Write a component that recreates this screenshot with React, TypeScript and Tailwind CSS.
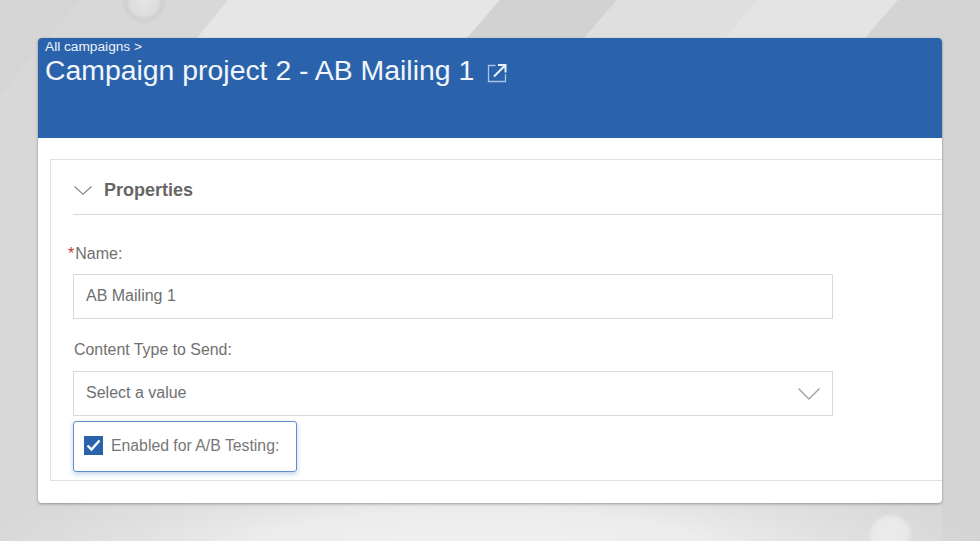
import React from "react";

function Backdrop() {
  return (
    <svg className="absolute inset-0" width="980" height="541" viewBox="0 0 980 541" aria-hidden="true">
      <defs>
        <filter id="soft" x="-20%" y="-20%" width="140%" height="140%">
          <feGaussianBlur stdDeviation="1.5" />
        </filter>
        <radialGradient id="ballTop" cx="0.5" cy="0.45" r="0.5">
          <stop offset="0" stopColor="#e4e4e4" />
          <stop offset="0.72" stopColor="#dddddd" />
          <stop offset="0.92" stopColor="#cbcbcb" />
          <stop offset="1" stopColor="#d6d6d6" />
        </radialGradient>
        <radialGradient id="ballBottom" cx="0.42" cy="0.45" r="0.58">
          <stop offset="0" stopColor="#ececec" />
          <stop offset="0.75" stopColor="#e8e8e8" />
          <stop offset="1" stopColor="#d8d8d8" />
        </radialGradient>
        <radialGradient id="floor" gradientUnits="userSpaceOnUse" cx="0" cy="0" r="1" gradientTransform="translate(480 570) scale(520 120)">
          <stop offset="0" stopColor="#f3f3f3" />
          <stop offset="0.5" stopColor="#ececec" />
          <stop offset="1" stopColor="#e4e4e4" stopOpacity="0" />
        </radialGradient>
      </defs>
      <rect width="980" height="541" fill="#d8d8d8" />
      <polygon points="0,0 80,0 0,95" fill="#d5d5d5" />
      <polygon points="228,0 500,0 467,38 197,38" fill="#e6e6e6" />
      <polygon points="500,0 617,0 584,38 467,38" fill="#d2d2d2" />
      <polygon points="617,0 757,0 725,38 584,38" fill="#dfdfdf" />
      <polygon points="757,0 898,0 865,38 725,38" fill="#e4e4e4" />
      <polygon points="898,0 980,0 980,541 942,541 942,38 865,38" fill="#d4d4d4" />
      <rect y="440" width="980" height="101" fill="url(#floor)" />
      <circle cx="144" cy="3" r="21" fill="url(#ballTop)" filter="url(#soft)" />
      <circle cx="892" cy="537" r="22" fill="url(#ballBottom)" filter="url(#soft)" />
    </svg>
  );
}

export default function App() {
  return (
    <div className="relative h-[541px] w-[980px] overflow-hidden font-['Liberation_Sans',Arial,sans-serif]">
      <Backdrop />
      <div className="relative pl-[38px] pt-[38px]">
        <div className="h-[465px] w-[904px] overflow-hidden rounded-[4px] bg-white shadow-[0_1px_3px_rgba(0,0,0,0.35)]">
          <header className="h-[100px] bg-[#2a63ac] pl-[7px] text-white">
            <div className="text-[13.7px] leading-[18px] text-[#eef3fa]">All campaigns &gt;</div>
            <div className="flex h-[30px] items-center gap-[13px]">
              <h1 className="-mt-[2px] text-[28.4px] leading-[30px] text-[#f2f6fb]">Campaign project 2 - AB Mailing 1</h1>
              <svg width="20" height="20" viewBox="0 0 20 20" fill="none" className="mt-[3px]">
                <path d="M8.5 2.5H1.5v16h17V11" stroke="#a9c4e6" strokeWidth="1.3" />
                <path d="M7 13.5 17.5 3M11 2h7.5v7.5" stroke="#eaf1f9" strokeWidth="2" />
              </svg>
            </div>
          </header>
          <div className="pl-[12px] pt-[21px]">
            <section className="h-[322px] border border-r-0 border-[#e0e0e0] pl-[22px]">
              <div className="flex h-[55px] items-center gap-[12px] border-b border-[#d9d9d9] pl-[1px] pt-[6px]">
                <svg width="18" height="9" viewBox="0 0 18 9" fill="none" stroke="#8a8a8a" strokeWidth="1.2">
                  <path d="M0.5 0.5 9 8.2 17.5 0.5" />
                </svg>
                <h2 className="text-[18px] font-bold text-[#666666]">Properties</h2>
              </div>
              <div className="w-[760px]">
                <label className="-ml-[5px] mt-[29px] flex h-[20px] items-center text-[16px] text-[#707070]">
                  <span className="mr-[1px] text-[#c23934]">*</span>Name:
                </label>
                <div className="mt-[10px] flex h-[45px] items-center border border-[#d9d9d9] pb-[2px] pl-[12px] text-[16px] text-[#707070]">
                  AB Mailing 1
                </div>
                <label className="mt-[21px] flex h-[20px] items-center pl-[1px] text-[15.9px] text-[#707070]">
                  Content Type to Send:
                </label>
                <div className="mt-[11px] flex h-[45px] items-center justify-between border border-[#d9d9d9] pb-[2px] pl-[12px] pr-[12px] text-[16px] text-[#707070]">
                  Select a value
                  <svg width="22" height="12" viewBox="0 0 22 12" fill="none" stroke="#a0a0a0" strokeWidth="1.4" className="mt-[2px]">
                    <path d="M0.5 0.5 11 11 21.5 0.5" />
                  </svg>
                </div>
                <div className="mt-[5px] flex h-[51px] w-[224px] items-center gap-[8px] rounded-[3px] border border-[#5b8fd0] pb-[2px] pl-[10px] text-[15.8px] text-[#777777] shadow-[0_2px_5px_rgba(42,99,172,0.3)]">
                  <span className="flex h-[19px] w-[19px] items-center justify-center bg-[#2a63ac]">
                    <svg width="15" height="13" viewBox="0 0 15 13" fill="none" stroke="white" strokeWidth="2.4">
                      <path d="M1.5 6.5 5.5 10.5 13.5 1.5" />
                    </svg>
                  </span>
                  Enabled for A/B Testing:
                </div>
              </div>
            </section>
          </div>
        </div>
      </div>
    </div>
  );
}
